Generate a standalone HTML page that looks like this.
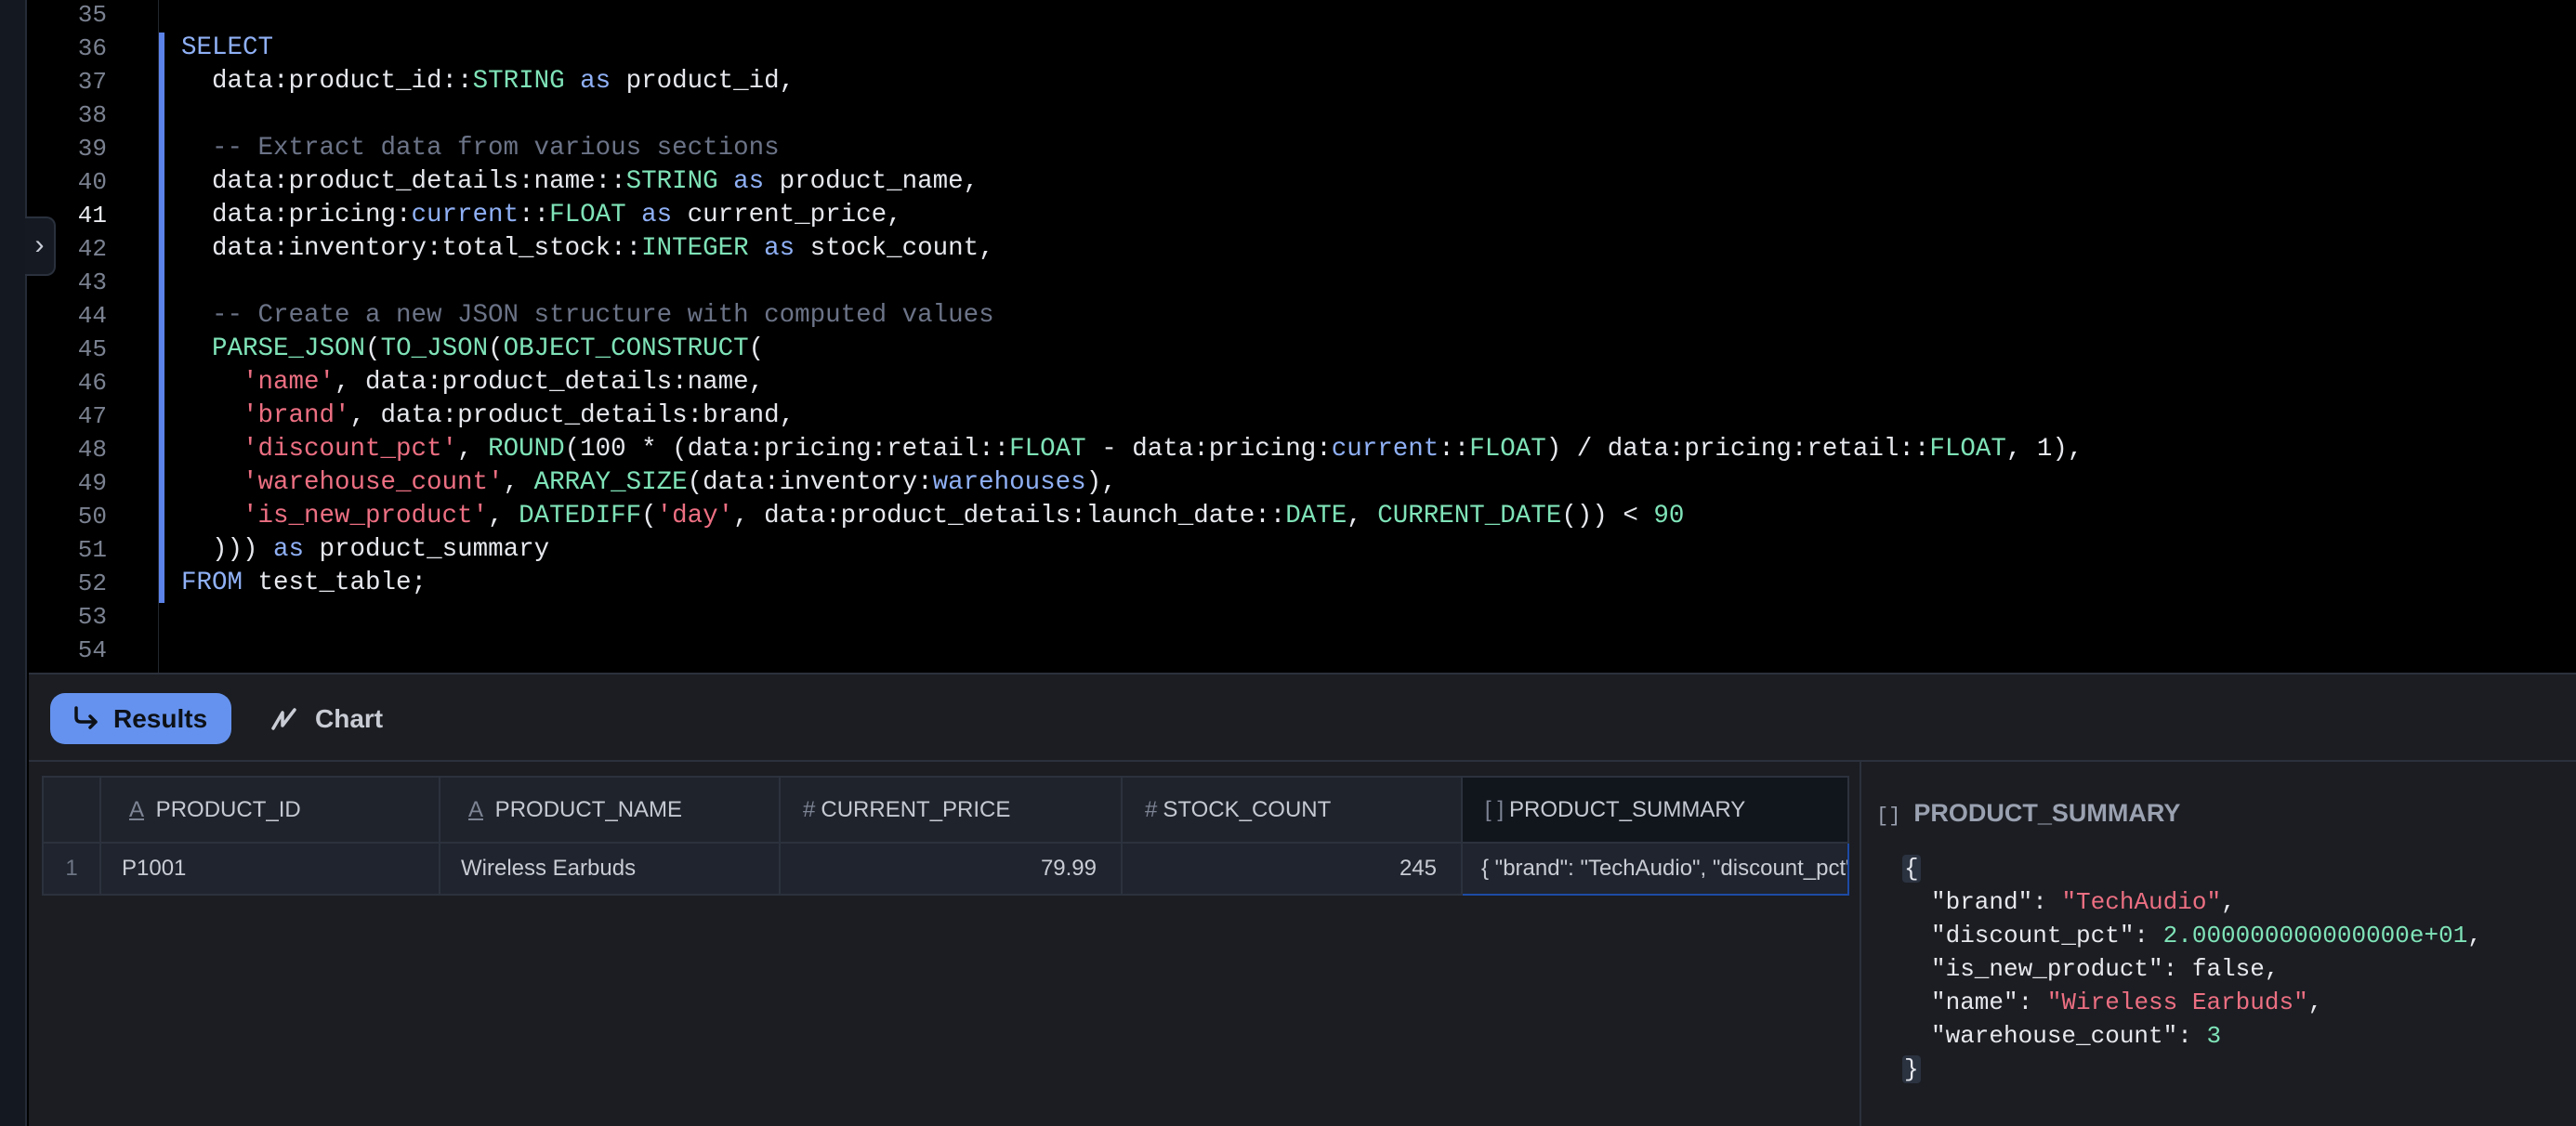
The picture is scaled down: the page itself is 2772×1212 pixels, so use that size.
<!DOCTYPE html>
<html><head><meta charset="utf-8"><style>
*{margin:0;padding:0;box-sizing:border-box}
body{width:2772px;height:1212px;overflow:hidden;background:#000;position:relative;font-family:"Liberation Sans",sans-serif}
.strip{position:absolute;left:0;top:0;width:29px;height:1212px;background:#141921;border-right:2px solid #262c37}
.tog{position:absolute;left:27px;top:233px;width:33px;height:64px;background:#151a22;border:2px solid #2a313d;border-left:none;border-radius:0 10px 10px 0;color:#c8ccd6;font-size:30px;line-height:58px;text-align:center}
.ed{position:absolute;left:31px;top:0;right:0;height:724px;background:#000}
.gut{position:absolute;left:0;top:0;width:140px;height:724px;border-right:1px solid #22272f}
.ln{position:absolute;left:0;width:84px;text-align:right;font-family:"Liberation Mono",monospace;font-size:26px;color:#7a8190;height:36px;line-height:36px}
.ln.a{color:#e8eaef}
.bar{position:absolute;left:171px;top:35px;width:6px;height:614px;background:#5b82e8}
.cl{position:absolute;left:195px;height:36px;line-height:36px;font-family:"Liberation Mono",monospace;font-size:27.5px;color:#e6e8ee;white-space:pre}
.k{color:#8fb0f5}.t{color:#7fe3b8}.c{color:#6b7387}.s{color:#ec6f82}.n{color:#7fe3b8}
.bp{position:absolute;left:31px;top:724px;right:0;bottom:0;background:#1b1d22;border-top:2px solid #2b313c}
.tabs{position:absolute;left:0;top:0;right:0;height:94px;border-bottom:2px solid #2b313c}
.res{position:absolute;left:23px;top:20px;width:195px;height:55px;background:#6592ee;border-radius:16px;color:#0d1117;font-size:28px;font-weight:bold;line-height:55px;padding-left:68px}
.chart{position:absolute;left:258px;top:20px;height:55px;line-height:55px;color:#c9ccd4;font-size:28px;font-weight:bold;padding-left:50px}
table{position:absolute;left:14px;top:109px;border-collapse:collapse;font-size:24px;color:#c9ccd4}
td{border:2px solid #2c323d;background:#1f242e;white-space:nowrap;overflow:hidden}
tr.h td{height:71px;background:#1f232c;color:#c5c9d2}
tr.r td{height:56px}
.ic{color:#7d8494;margin-right:6px;font-size:24px}
.det{position:absolute;left:1970px;top:94px;right:0;bottom:0;border-left:2px solid #2b313c}
.dt{position:absolute;left:16px;top:40px;font-size:27px;font-weight:bold;color:#9aa1b0}
.js{position:absolute;left:75px;height:36px;line-height:36px;font-family:"Liberation Mono",monospace;font-size:26px;color:#e6e8ee;white-space:pre}
.br{background:#2b3240;border-radius:4px;padding:0 2px}
</style></head><body>
<div class="ed">
<div class="gut"></div>
</div>
<div class="strip"></div>
<div class="tog">›</div>
<div style="position:absolute;left:31px;top:0">
<div class="ln" style="top:-2px">35</div><div class="ln" style="top:34px">36</div><div class="ln" style="top:70px">37</div><div class="ln" style="top:106px">38</div><div class="ln" style="top:142px">39</div><div class="ln" style="top:178px">40</div><div class="ln a" style="top:214px">41</div><div class="ln" style="top:250px">42</div><div class="ln" style="top:286px">43</div><div class="ln" style="top:322px">44</div><div class="ln" style="top:358px">45</div><div class="ln" style="top:394px">46</div><div class="ln" style="top:430px">47</div><div class="ln" style="top:466px">48</div><div class="ln" style="top:502px">49</div><div class="ln" style="top:538px">50</div><div class="ln" style="top:574px">51</div><div class="ln" style="top:610px">52</div><div class="ln" style="top:646px">53</div><div class="ln" style="top:682px">54</div>
</div>
<div class="bar"></div>
<div class="cl" style="top:34px"><span class="k">SELECT</span></div>
<div class="cl" style="top:70px">  data:product_id::<span class="t">STRING</span> <span class="k">as</span> product_id,</div>
<div class="cl" style="top:142px"><span class="c">  -- Extract data from various sections</span></div>
<div class="cl" style="top:178px">  data:product_details:name::<span class="t">STRING</span> <span class="k">as</span> product_name,</div>
<div class="cl" style="top:214px">  data:pricing:<span class="k">current</span>::<span class="t">FLOAT</span> <span class="k">as</span> current_price,</div>
<div class="cl" style="top:250px">  data:inventory:total_stock::<span class="t">INTEGER</span> <span class="k">as</span> stock_count,</div>
<div class="cl" style="top:322px"><span class="c">  -- Create a new JSON structure with computed values</span></div>
<div class="cl" style="top:358px">  <span class="t">PARSE_JSON</span>(<span class="t">TO_JSON</span>(<span class="t">OBJECT_CONSTRUCT</span>(</div>
<div class="cl" style="top:394px">    <span class="s">'name'</span>, data:product_details:name,</div>
<div class="cl" style="top:430px">    <span class="s">'brand'</span>, data:product_details:brand,</div>
<div class="cl" style="top:466px">    <span class="s">'discount_pct'</span>, <span class="t">ROUND</span>(100 * (data:pricing:retail::<span class="t">FLOAT</span> - data:pricing:<span class="k">current</span>::<span class="t">FLOAT</span>) / data:pricing:retail::<span class="t">FLOAT</span>, 1),</div>
<div class="cl" style="top:502px">    <span class="s">'warehouse_count'</span>, <span class="t">ARRAY_SIZE</span>(data:inventory:<span class="k">warehouses</span>),</div>
<div class="cl" style="top:538px">    <span class="s">'is_new_product'</span>, <span class="t">DATEDIFF</span>(<span class="s">'day'</span>, data:product_details:launch_date::<span class="t">DATE</span>, <span class="t">CURRENT_DATE</span>()) &lt; <span class="n">90</span></div>
<div class="cl" style="top:574px">  ))) <span class="k">as</span> product_summary</div>
<div class="cl" style="top:610px"><span class="k">FROM</span> test_table;</div>

<div class="bp">
<div class="tabs">
<div class="res"><svg style="position:absolute;left:24px;top:14px" width="30" height="28" viewBox="0 0 30 28"><path d="M4 2v10q0 5 5 5h16M19 11l6 6-6 6" fill="none" stroke="#0d1117" stroke-width="3.5" stroke-linecap="round" stroke-linejoin="round"/></svg>Results</div>
<div class="chart"><svg style="position:absolute;left:2px;top:15px" width="30" height="26" viewBox="0 0 30 26"><path d="M3 23L13 6v14L26 3" fill="none" stroke="#c9ccd4" stroke-width="3.5" stroke-linecap="round" stroke-linejoin="round"/></svg>Chart</div>
</div>
<table>
<tr class="h"><td style="width:62px"></td><td style="width:365px;padding-left:30px"><span class="ic" style="text-decoration:underline">A</span> PRODUCT_ID</td><td style="width:366px;padding-left:30px"><span class="ic" style="text-decoration:underline">A</span> PRODUCT_NAME</td><td style="width:368px;padding-left:24px"><span class="ic">#</span>CURRENT_PRICE</td><td style="width:366px;padding-left:24px"><span class="ic">#</span>STOCK_COUNT</td><td style="width:416px;padding-left:24px;background:#11151c"><span class="ic">[ ]</span>PRODUCT_SUMMARY</td></tr>
<tr class="r"><td style="text-align:center;color:#6e7585">1</td><td style="padding-left:22px">P1001</td><td style="padding-left:22px">Wireless Earbuds</td><td style="text-align:right;padding-right:26px">79.99</td><td style="text-align:right;padding-right:26px">245</td><td style="padding-left:20px;border:2px solid #1e4aa5;max-width:416px">{ "brand": "TechAudio", "discount_pct": 20</td></tr>
</table>
<div class="det">
<div class="dt"><span style="font-weight:normal;font-family:'Liberation Mono',monospace;font-size:22px;margin-right:14px">[]</span>PRODUCT_SUMMARY</div>
<div class="js" style="left:44px;top:97px"><span class="br">{</span></div>
<div class="js" style="top:133px">"brand": <span class="s">"TechAudio"</span>,</div>
<div class="js" style="top:169px">"discount_pct": <span class="n">2.000000000000000e+01</span>,</div>
<div class="js" style="top:205px">"is_new_product": false,</div>
<div class="js" style="top:241px">"name": <span class="s">"Wireless Earbuds"</span>,</div>
<div class="js" style="top:277px">"warehouse_count": <span class="n">3</span></div>
<div class="js" style="left:44px;top:313px"><span class="br">}</span></div>
</div>
</div>
</body></html>
